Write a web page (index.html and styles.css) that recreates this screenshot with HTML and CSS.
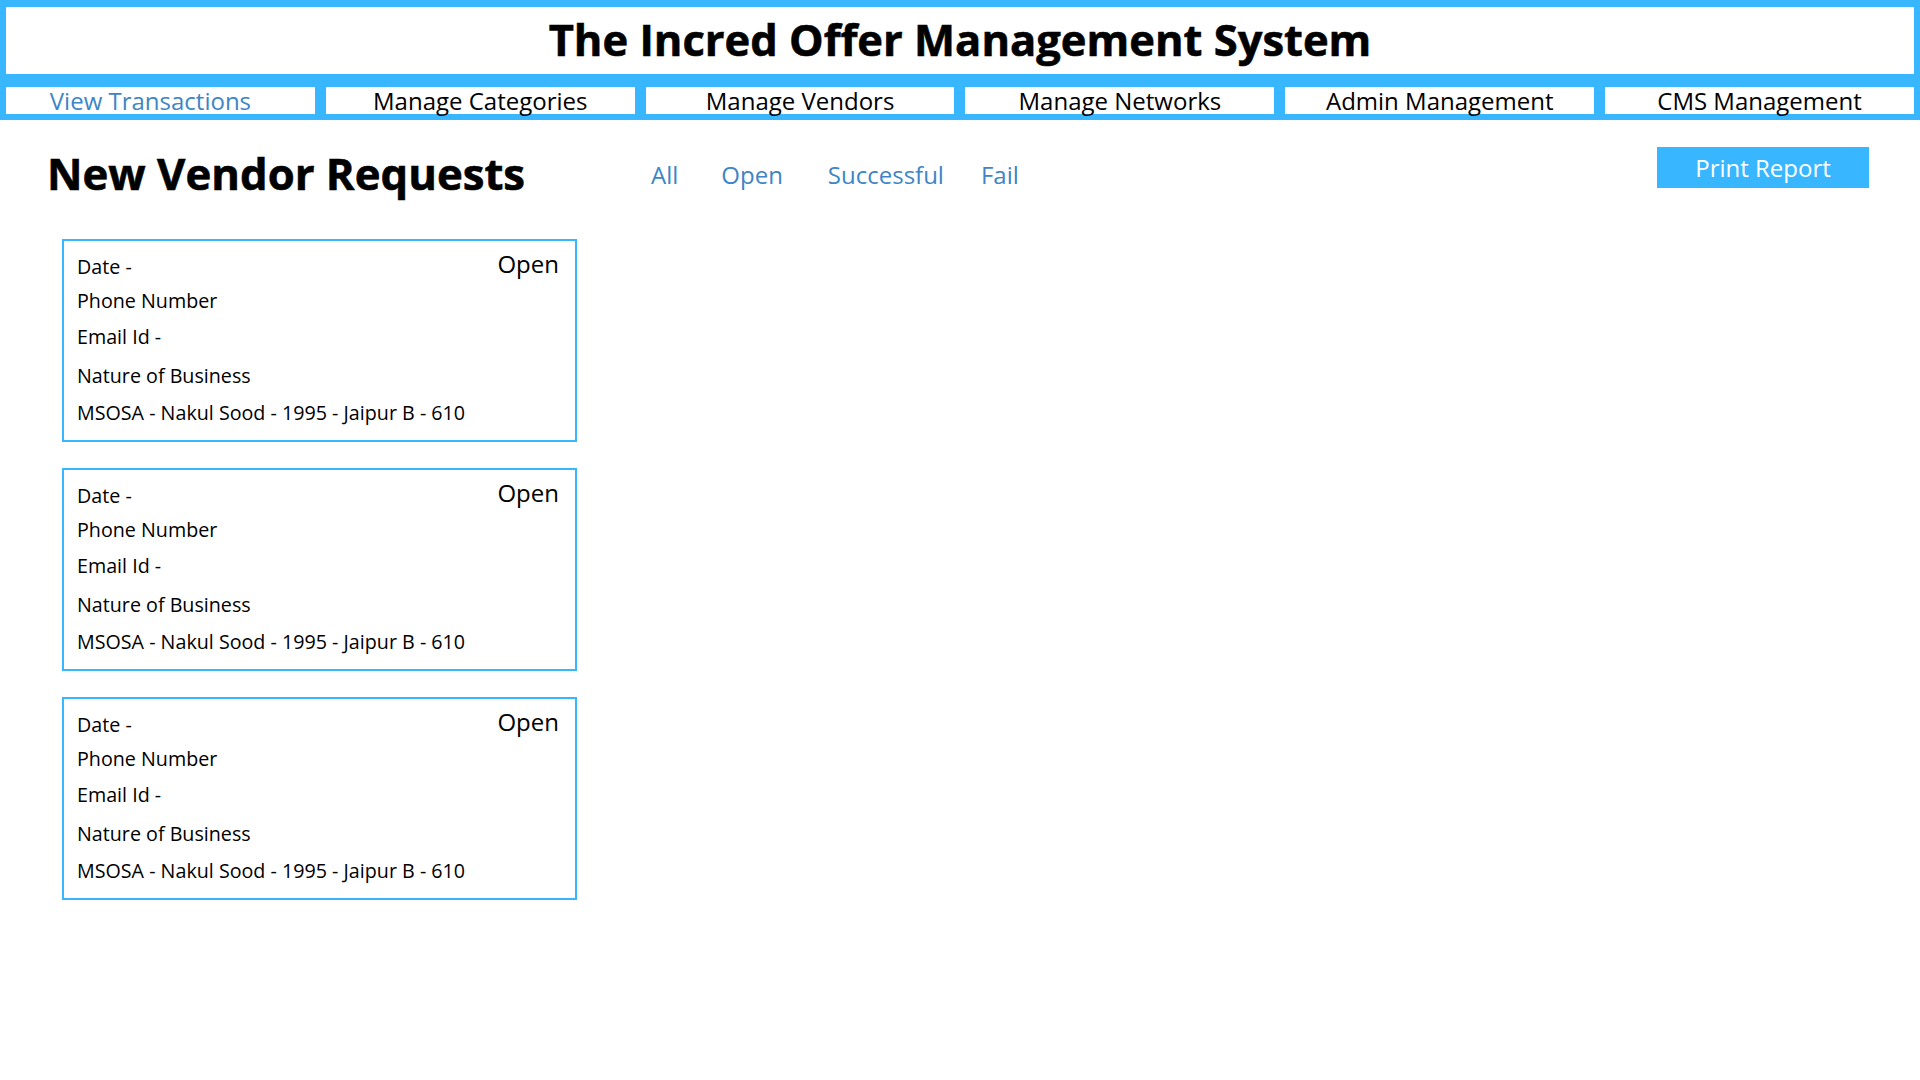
FILE: index.html
```html
<!DOCTYPE html>
<html lang="en">
<head>
<meta charset="utf-8">
<title>The Incred Offer Management System</title>
<link rel="stylesheet" href="styles.css">
</head>
<body>
<header class="masthead">
  <div class="brand">The Incred Offer Management System</div>
  <nav class="mainnav">
    <a class="navitem active" href="#">View Transactions</a>
    <a class="navitem" href="#">Manage Categories</a>
    <a class="navitem" href="#">Manage Vendors</a>
    <a class="navitem" href="#">Manage Networks</a>
    <a class="navitem" href="#">Admin Management</a>
    <a class="navitem" href="#">CMS Management</a>
  </nav>
</header>
<main class="content">
  <div class="toolbar">
    <h1 class="page-title">New Vendor Requests</h1>
    <div class="filters">
      <a class="filter f-all" href="#">All</a>
      <a class="filter f-open" href="#">Open</a>
      <a class="filter f-succ" href="#">Successful</a>
      <a class="filter f-fail" href="#">Fail</a>
    </div>
    <button class="print-btn">Print Report</button>
  </div>
  <section class="cards">
    <article class="card">
      <div class="row first"><span>Date -</span><span class="status">Open</span></div>
      <div class="row short">Phone Number</div>
      <div class="row short">Email Id -</div>
      <div class="row spaced">Nature of Business</div>
      <div class="row">MSOSA - Nakul Sood - 1995 - Jaipur B - 610</div>
    </article>
    <article class="card">
      <div class="row first"><span>Date -</span><span class="status">Open</span></div>
      <div class="row short">Phone Number</div>
      <div class="row short">Email Id -</div>
      <div class="row spaced">Nature of Business</div>
      <div class="row">MSOSA - Nakul Sood - 1995 - Jaipur B - 610</div>
    </article>
    <article class="card">
      <div class="row first"><span>Date -</span><span class="status">Open</span></div>
      <div class="row short">Phone Number</div>
      <div class="row short">Email Id -</div>
      <div class="row spaced">Nature of Business</div>
      <div class="row">MSOSA - Nakul Sood - 1995 - Jaipur B - 610</div>
    </article>
  </section>
</main>
</body>
</html>
```
FILE: styles.css
```css
* { box-sizing: border-box; }
html, body { margin: 0; padding: 0; background: #fff; }
body {
  font-family: "Open Sans", "Liberation Sans", sans-serif;
  color: #000;
  width: 1920px;
  height: 1080px;
  overflow: hidden;
}
.masthead {
  background: #38b6ff;
  padding: 7px 6px 6px 6px;
}
.brand {
  background: #fff;
  height: 67px;
  display: flex;
  align-items: center;
  justify-content: center;
  font-weight: 700;
  font-size: 43.5px;
  line-height: 1;
  padding-bottom: 2px;
  -webkit-text-stroke: 0.6px #000;
}
.mainnav {
  margin-top: 13px;
  display: flex;
  gap: 11px;
}
.navitem {
  flex: 1 1 0;
  min-width: 0;
  background: #fff;
  height: 27px;
  line-height: 27px;
  text-align: center;
  font-size: 24px;
  color: #000;
  text-decoration: none;
}
.navitem.active {
  color: #3d85c6;
  text-indent: -20px;
}

.content {
  padding: 0 51px 0 47px;
}
.toolbar {
  display: flex;
  align-items: center;
  height: 70px;
  margin-top: 18px;
}
.page-title {
  flex: 0 0 480px;
  min-width: 0;
  margin: 0;
  font-size: 43.7px;
  font-weight: 700;
  line-height: 1;
  white-space: nowrap;
  -webkit-text-stroke: 0.6px #000;
  position: relative;
  top: 1px;
}
.filters {
  display: flex;
  align-items: center;
  margin-left: 124px;
  margin-top: 3px;
}
.filter {
  font-size: 24px;
  color: #3d85c6;
  text-decoration: none;
}
.f-open { margin-left: 43px; }
.f-succ { margin-left: 45px; }
.f-fail { margin-left: 37px; }
.print-btn {
  margin-left: auto;
  align-self: flex-start;
  margin-top: 9px;
  width: 212px;
  height: 41px;
  border: none;
  background: #38b6ff;
  color: #fff;
  font-family: inherit;
  font-size: 24px;
  padding: 0;
}
.cards {
  margin-left: 15px;
  margin-top: 31px;
  display: flex;
  flex-direction: column;
  gap: 26px;
  width: 515px;
}
.card {
  border: 2px solid #38b6ff;
  height: 203px;
  padding: 5px 16px 0 13px;
}
.row {
  font-size: 19.7px;
  line-height: 37px;
  height: 37px;
}
.row.short {
  line-height: 36px;
  height: 36px;
}
.row.spaced { margin-top: 2px; }
.row.first {
  display: flex;
  justify-content: space-between;
  align-items: baseline;
}
.status {
  font-size: 24px;
  position: relative;
  top: -1px;
}
```
